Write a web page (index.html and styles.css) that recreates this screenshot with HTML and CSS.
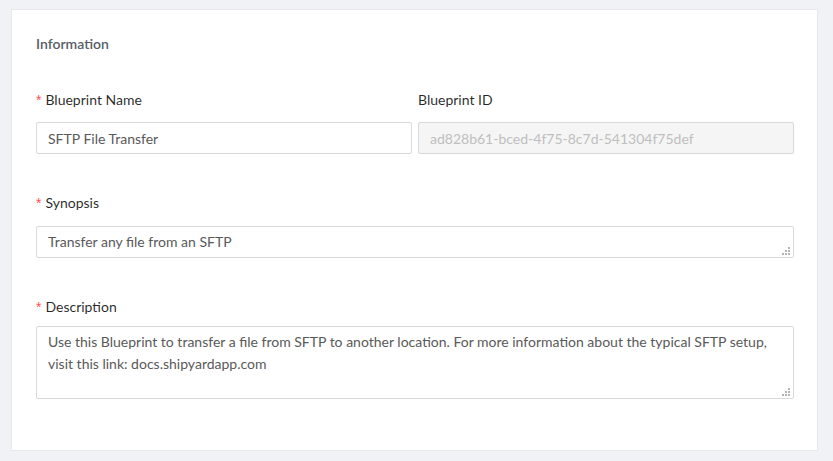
FILE: index.html
```html
<!DOCTYPE html>
<html lang="en">
<head>
<meta charset="utf-8">
<title>Blueprint Information</title>
<link rel="stylesheet" href="styles.css">
</head>
<body>
<section class="card">
  <h2 class="card-title">Information</h2>
  <div class="row-two">
    <div class="field">
      <label class="label label-name"><span class="req">*</span>Blueprint Name</label>
      <input class="input" type="text" value="SFTP File Transfer">
    </div>
    <div class="field">
      <label class="label label-name">Blueprint ID</label>
      <input class="input input-disabled" type="text" value="ad828b61-bced-4f75-8c7d-541304f75def" disabled>
    </div>
  </div>
  <div class="field field-synopsis">
    <label class="label label-synopsis"><span class="req">*</span>Synopsis</label>
    <div class="area-wrap">
      <textarea class="area area-short">Transfer any file from an SFTP</textarea>
      <svg class="grip" width="8" height="8" viewBox="0 0 8 8"><rect x="6" y="0" width="2" height="2"/><rect x="3" y="3" width="2" height="2"/><rect x="6" y="3" width="2" height="2"/><rect x="0" y="6" width="2" height="2"/><rect x="3" y="6" width="2" height="2"/><rect x="6" y="6" width="2" height="2"/></svg>
    </div>
  </div>
  <div class="field field-desc">
    <label class="label label-desc"><span class="req">*</span>Description</label>
    <div class="area-wrap">
      <textarea class="area area-tall">Use this Blueprint to transfer a file from SFTP to another location. For more information about the typical SFTP setup, visit this link: docs.shipyardapp.com</textarea>
      <svg class="grip" width="8" height="8" viewBox="0 0 8 8"><rect x="6" y="0" width="2" height="2"/><rect x="3" y="3" width="2" height="2"/><rect x="6" y="3" width="2" height="2"/><rect x="0" y="6" width="2" height="2"/><rect x="3" y="6" width="2" height="2"/><rect x="6" y="6" width="2" height="2"/></svg>
    </div>
  </div>
</section>
</body>
</html>
```

FILE: styles.css
```css
* { box-sizing: border-box; }
html, body { height: 100%; }
body {
  margin: 0;
  padding: 9px 15px 10px 11px;
  background: #f0f2f5;
  font-family: "Lato", "Noto Sans", sans-serif;
  font-size: 14px;
  line-height: 22px;
  color: rgba(0, 0, 0, 0.85);
}
.card {
  background: #fff;
  border: 1px solid #e6e8eb;
  padding: 23px 23px 51px 24px;
  height: 442px;
}
.card-title {
  margin: 0 0 34px;
  font-size: 14px;
  line-height: 22px;
  font-weight: 600;
  color: #565d66;
}
.row-two {
  display: grid;
  grid-template-columns: 1fr 1fr;
  column-gap: 6px;
}
.field { display: flex; flex-direction: column; }
.label { display: block; height: 22px; }
.label-name { margin-bottom: 11px; }
.field-synopsis { margin-top: 38px; }
.label-synopsis { margin-bottom: 12px; }
.field-desc { margin-top: 38px; }
.label-desc { margin-bottom: 8px; }
.req {
  color: #ff4d4f;
  margin-right: 4px;
  font-family: "Liberation Sans", sans-serif;
}
.input, .area {
  font: inherit;
  color: #595959;
  border: 1px solid #d9d9d9;
  border-radius: 2px;
  background: #fff;
  padding: 4px 11px;
  width: 100%;
  outline: none;
  margin: 0;
}
.input { height: 32px; }
.input-disabled {
  background: #f5f5f5;
  color: #bfbfbf;
}
.area-wrap { position: relative; }
.area {
  display: block;
  resize: none;
  overflow: hidden;
}
.area-short { height: 32px; }
.area-tall { height: 73px; }
.grip {
  position: absolute;
  right: 4px;
  bottom: 3px;
  fill: #b4b4b4;
}
```
